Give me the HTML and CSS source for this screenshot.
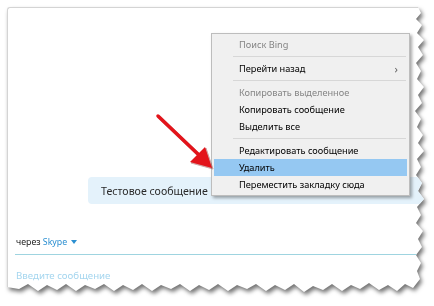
FILE: index.html
```html
<!DOCTYPE html>
<html lang="ru">
<head>
  <meta charset="UTF-8">
  <title>Skype — контекстное меню</title>
  <link rel="stylesheet" href="styles.css">
</head>
<body>

  <div class="sheet">
    <div class="paper">
      <div class="chat">
        <div class="bubble">Тестовое сообщение</div>
        <div class="via">через <span class="skype">Skype</span> <span class="caret"></span></div>
        <div class="compose">Введите сообщение</div>
      </div>

      <ul class="menu">
        <li class="item disabled">Поиск Bing</li>
        <li class="sep"></li>
        <li class="item">Перейти назад <span class="more">›</span></li>
        <li class="sep"></li>
        <li class="item disabled">Копировать выделенное</li>
        <li class="item">Копировать сообщение</li>
        <li class="item">Выделить все</li>
        <li class="sep"></li>
        <li class="item">Редактировать сообщение</li>
        <li class="item active">Удалить</li>
        <li class="item">Переместить закладку сюда</li>
      </ul>
    </div>
  </div>

  <!-- red pointer drawn over the screenshot -->
  <svg class="pointer" width="434" height="306" viewBox="0 0 434 306">
    <g transform="translate(1 1)" fill="#7a0000" stroke="#7a0000" opacity="0.35">
      <line x1="158" y1="116" x2="200" y2="156" stroke-width="3.5" stroke-linecap="round"/>
      <polygon points="212,168 190,162 205,147"/>
    </g>
    <line x1="158" y1="116" x2="200" y2="156" stroke="#e3141b" stroke-width="3.5" stroke-linecap="round"/>
    <polygon points="212,168 190,162 205,147" fill="#e3141b"/>
  </svg>

</body>
</html>
```

FILE: styles.css
```css
html, body {
  margin: 0;
  background: #fff;
}
body {
  width: 434px;
  height: 306px;
  position: relative;
  overflow: hidden;
  font-family: "Noto Sans", "Open Sans", sans-serif;
}
.sheet {
  margin: 7px 0 0 7px;
  width: 420px;
  height: 288px;
  filter: drop-shadow(2px 3px 2px rgba(0,0,0,0.55));
}
.paper {
  position: relative;
  box-sizing: border-box;
  width: 420px;
  height: 288px;
  background: #fff;
  border-left: 1px solid #d4d4d4;
  border-top: 1px solid #d4d4d4;
  border-top-left-radius: 3px;
  clip-path: polygon(0 0, 411px 0, 414px 6px, 409px 12px, 415px 18px, 410px 26px, 417px 33px, 411px 40px, 416px 48px, 409px 56px, 414px 64px, 410px 72px, 417px 80px, 411px 88px, 415px 96px, 408px 104px, 414px 112px, 410px 120px, 416px 128px, 411px 136px, 417px 144px, 410px 152px, 414px 160px, 409px 168px, 415px 176px, 411px 184px, 417px 192px, 410px 200px, 414px 208px, 409px 216px, 416px 224px, 411px 232px, 415px 240px, 409px 248px, 414px 256px, 410px 264px, 413px 272px, 406px 281px, 398px 277px, 390px 284px, 381px 278px, 372px 283px, 362px 276px, 353px 282px, 344px 278px, 335px 284px, 325px 277px, 316px 283px, 306px 279px, 297px 285px, 287px 277px, 278px 283px, 268px 278px, 259px 284px, 249px 277px, 240px 282px, 230px 278px, 221px 284px, 211px 277px, 202px 283px, 192px 278px, 183px 284px, 173px 277px, 164px 282px, 154px 278px, 145px 284px, 135px 277px, 126px 283px, 116px 278px, 107px 284px, 97px 277px, 88px 282px, 78px 278px, 69px 284px, 59px 277px, 50px 283px, 40px 278px, 31px 284px, 21px 277px, 12px 282px, 0 280px);
}

/* chat area */
.chat {
  padding: 169px 0 0 7px;
  font-size: 10.6px;
  line-height: 14px;
}
.bubble {
  margin-left: 73px;
  height: 27px;
  padding-left: 13px;
  display: flex;
  align-items: center;
  background: #e4f2fb;
  border-radius: 4px 0 0 4px;
  color: #2a2a2a;
}
.via {
  margin-top: 31px;
  padding: 0 0 5px 1px;
  border-bottom: 1px solid #9fd4e0;
  font-size: 8.8px;
  color: #222;
}
.skype {
  color: #2b8fd1;
}
.caret {
  display: inline-block;
  width: 0;
  height: 0;
  margin-left: 1px;
  vertical-align: 1px;
  border-left: 3.5px solid transparent;
  border-right: 3.5px solid transparent;
  border-top: 4px solid #2b8fd1;
}
.compose {
  margin-top: 14px;
  padding-left: 1px;
  font-size: 9.7px;
  color: #a5d6ef;
}

/* context menu */
.menu {
  position: absolute;
  left: 203px;
  top: 25px;
  width: 193px;
  margin: 0;
  padding: 2px;
  list-style: none;
  background: #f0f0f0;
  border: 1px solid #bdbdbd;
  box-shadow: 2px 2px 3px rgba(0,0,0,0.35);
  font-size: 9.2px;
  color: #000;
}
.item {
  display: flex;
  justify-content: space-between;
  align-items: center;
  height: 17px;
  padding: 0 9px 0 25px;
  white-space: nowrap;
}
.item.disabled {
  color: #858585;
}
.item.active {
  background: #95c8f2;
}
.more {
  color: #666;
  font-size: 11px;
}
.sep {
  height: 1px;
  margin: 3px 1px 3px 19px;
  background: #d7d7d7;
}

.pointer {
  position: absolute;
  left: 0;
  top: 0;
  pointer-events: none;
}
```
